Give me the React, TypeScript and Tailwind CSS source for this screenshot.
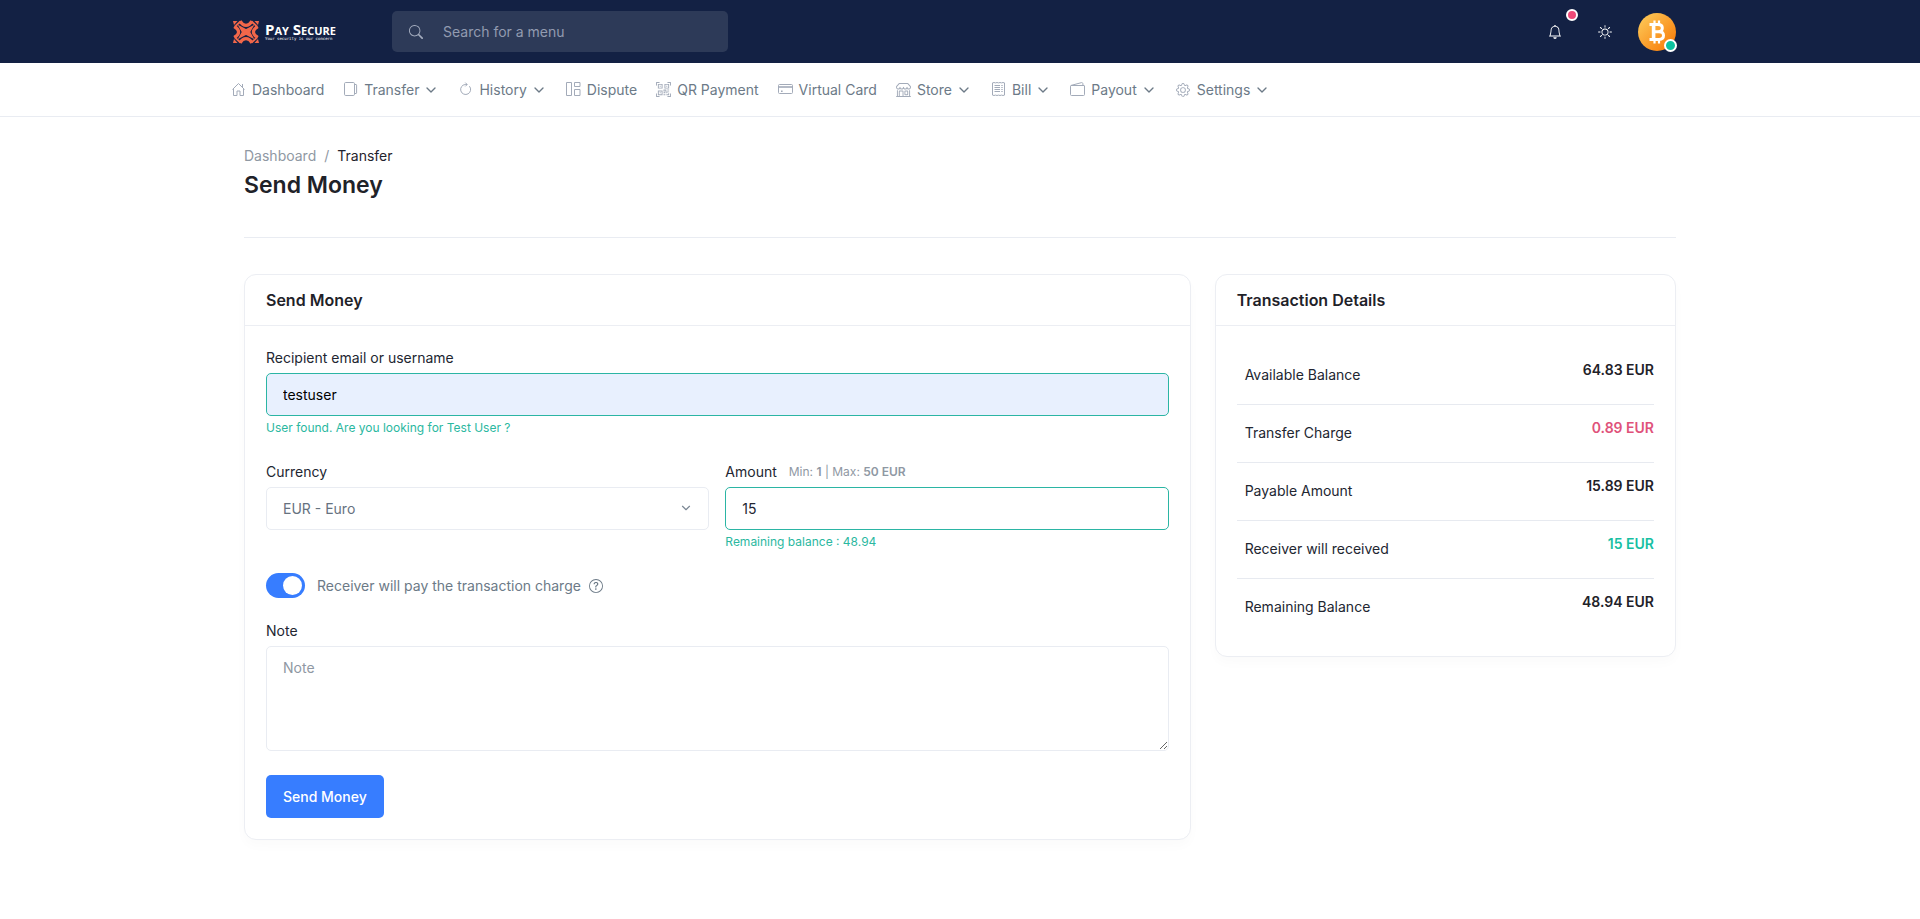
import React from "react";
import { ChevronDown } from "lucide-react";
import { BsBell, BsGear, BsQrCodeScan, BsQuestionCircle, BsSearch, BsShop, BsSun } from "react-icons/bs";

type IconProps = { children: React.ReactNode };

function Outline({ children }: IconProps) {
  return (
    <svg viewBox="0 0 15 15" className="size-[15px]" fill="none" stroke="currentColor" strokeWidth="1" strokeLinejoin="round" aria-hidden="true">
      {children}
    </svg>
  );
}

const HomeIcon = () => (
  <Outline>
    <path d="M1.5 7.500 7.500 1.500l6 6M2.500 7v6.500H6V9h3v4.500h3.500V7M11.500 2v3" />
  </Outline>
);

const TransferIcon = () => (
  <Outline>
    <rect x="1.5" y=".5" width="10" height="13" rx="1.2" />
    <path d="M12 2.5h1a.6.6 0 0 1 .6.6v7.8a.6.6 0 0 1-.6.6h-1" />
  </Outline>
);

const HistoryIcon = () => (
  <Outline>
    <path d="M11.400 4.200A5 5 0 1 1 7.200 2.500H9M7.300.6 9.200 2.500 7.300 4.400" />
  </Outline>
);

const DisputeIcon = () => (
  <Outline>
    <rect x=".5" y=".5" width="5" height="13" />
    <rect x="8.5" y=".5" width="5.500" height="4" />
    <rect x="8.5" y="7.500" width="5.500" height="6" />
  </Outline>
);

const CardIcon = () => (
  <Outline>
    <rect x=".5" y="2.5" width="14" height="9" rx="1" />
    <path d="M.5 5h14" strokeWidth="1.6" />
    <path d="M3 9.2h1.6" strokeWidth="1.6" />
  </Outline>
);

const BillIcon = () => (
  <Outline>
    <path d="M1.5.9 3 .5l1.5.4L6 .5l1.5.4L9 .5l1.5.4L12 .5l1.5.4v12.2l-1.5.4-1.5-.4-1.5.4-1.5-.4-1.5.4-1.5-.4-1.5.4-1.5-.4z" />
    <path d="M3.5 3.5H9M3.5 5.5H9M3.5 7.5H9M3.5 9.5H9M10.3 3.5h1.4M10.3 5.5h1.4M10.3 7.5h1.4M10.3 9.5h1.4" />
  </Outline>
);

const WalletIcon = () => (
  <Outline>
    <path d="M1 3.5h13a.5.5 0 0 1 .5.5v8.500a1 1 0 0 1-1 1h-12a1 1 0 0 1-1-1V4.200c0-.4.2-.7.6-.8L11.600.6c.6-.1 1.100.2 1.200.8l.2 2" />
  </Outline>
);

const navItems = [
  { label: "Dashboard", icon: <HomeIcon />, menu: false },
  { label: "Transfer", icon: <TransferIcon />, menu: true },
  { label: "History", icon: <HistoryIcon />, menu: true },
  { label: "Dispute", icon: <DisputeIcon />, menu: false },
  { label: "QR Payment", icon: <BsQrCodeScan size={15} />, menu: false },
  { label: "Virtual Card", icon: <CardIcon />, menu: false },
  { label: "Store", icon: <BsShop size={15} />, menu: true },
  { label: "Bill", icon: <BillIcon />, menu: true },
  { label: "Payout", icon: <WalletIcon />, menu: true },
  { label: "Settings", icon: <BsGear size={14} />, menu: true },
];

const details = [
  { label: "Available Balance", value: "64.83 EUR", tone: "text-[#1f2229]" },
  { label: "Transfer Charge", value: "0.89 EUR", tone: "text-[#e0527a]" },
  { label: "Payable Amount", value: "15.89 EUR", tone: "text-[#1f2229]" },
  { label: "Receiver will received", value: "15 EUR", tone: "text-[#18bfa3]" },
  { label: "Remaining Balance", value: "48.94 EUR", tone: "text-[#1f2229]" },
];

function LogoMark() {
  return (
    <svg viewBox="0 0 26 24" className="h-6 w-[26px]" fill="none" stroke="#f2674a" aria-hidden="true">
      <path d="M0 1h4.500L1 5zM26 1h-4.500L25 5zM0 23h4.500L1 19zM26 23h-4.500L25 19z" fill="#f2674a" stroke="none" />
      <path d="M6.500 6.500 13 9.800l6.500-3.300L16.500 12l3 5.500L13 14.200l-6.500 3.300 3-5.500z" fill="#f2674a" strokeWidth="1.500" />
      <path d="M7 1.200C9 4.500 11 5.400 13 5.400s4-.9 6-4.200M7 22.800c2-3.300 4-4.200 6-4.200s4 .9 6 4.200" strokeWidth="3.200" />
      <path d="M1.200 6.500C4.800 8.500 5.600 10 5.600 12s-.8 3.500-4.400 5.500M24.800 6.500c-3.600 2-4.400 3.500-4.400 5.500s.8 3.500 4.400 5.500" strokeWidth="3.200" />
      <path d="M2.500 6 7.500 1.500M23.500 6l-5-4.500M2.500 18l5 4.500M23.500 18l-5 4.500" strokeWidth="1.800" />
    </svg>
  );
}

function Avatar() {
  return (
    <svg viewBox="0 0 38 38" className="size-[38px]" aria-hidden="true">
      <defs>
        <linearGradient id="coin" x1="0" y1="0" x2="1" y2="1">
          <stop offset="0.1" stopColor="#fdc655" />
          <stop offset="0.9" stopColor="#f87d0a" />
        </linearGradient>
      </defs>
      <circle cx="19" cy="19" r="19" fill="url(#coin)" />
      <g fill="none" stroke="#fff" strokeWidth="3">
        <path d="M11.500 11.500H20c3 0 4.300 1.500 4.300 3.600s-1.500 3.700-4.300 3.700h-4.500M14.800 18.800h6.200c3 0 4.500 1.600 4.500 3.800s-1.500 3.900-4.500 3.900h-9.500" />
        <path d="M15.600 11.500v15" strokeWidth="3.600" />
        <path d="M16.500 7.500v4M21 7.500v4M16.500 26.500v4M21 26.500v4" strokeWidth="2.200" />
      </g>
    </svg>
  );
}

const fieldClass = "block h-[43px] w-full rounded-[5px] border px-4 text-sm outline-none";
const labelClass = "text-sm leading-5 text-[#222631]";
const cardClass = "rounded-xl border border-[#eceef3] bg-white shadow-[0_6px_12px_rgba(0,0,0,0.02)]";
const cardTitleClass = "border-b border-[#eceef3] px-[21px] py-[13px] text-base leading-6 font-semibold text-[#1f2229]";

export default function App() {
  return (
    <div className="min-h-screen bg-white font-['Inter',sans-serif] text-sm text-[#222631]">
      <header className="bg-[#132144]">
        <div className="mx-auto flex h-[63px] max-w-[1456px] items-center pr-3">
          <a href="#" className="flex w-40 items-center gap-1.5 pl-px">
            <LogoMark />
            <span className="flex flex-col whitespace-nowrap text-white">
              <span className="font-['Open_Sans',sans-serif] text-[15px] leading-[14px] font-bold [font-variant-caps:small-caps]">Pay Secure</span>
              <span className="font-['DejaVu_Sans_Mono',monospace] text-[4px] leading-[6px]">Your security is our concern</span>
            </span>
          </a>
          <label className="flex h-[41px] w-[336px] items-center gap-5 rounded-[5px] bg-[#2d3a58] pl-[17px] text-[#a3abbd]">
            <BsSearch size={14} aria-hidden="true" />
            <input type="search" aria-label="Search for a menu" placeholder="Search for a menu" className="min-w-0 flex-1 bg-transparent text-sm outline-none placeholder:text-[#929bb0]" />
          </label>
          <div className="ml-auto flex items-center text-white">
            <button type="button" aria-label="Notifications" className="relative mr-9 flex size-[14px] items-center justify-center">
              <BsBell size={14} />
              <span className="absolute -top-4 left-[18px] size-3 rounded-full border-2 border-white bg-[#ee4a78]" />
            </button>
            <button type="button" aria-label="Switch theme" className="mr-[26px]">
              <BsSun size={14} />
            </button>
            <button type="button" aria-label="Account" className="relative">
              <Avatar />
              <span className="absolute -right-px -bottom-px size-[13px] rounded-full border-2 border-white bg-[#0cc2a0]" />
            </button>
          </div>
        </div>
      </header>

      <nav className="border-b border-[#e9ecf2]" aria-label="Main">
        <ul className="mx-auto flex h-[53px] max-w-[1458px] items-center gap-[19px]">
          {navItems.map((item) => (
            <li key={item.label}>
              <a href="#" className="flex items-center whitespace-nowrap text-[#6c7a87]">
                <span className="mr-1.5 flex w-[15px] justify-center text-[#a3abb9]">{item.icon}</span>
                {item.label}
                {item.menu && <ChevronDown size={16} strokeWidth={2} className="ml-1" aria-hidden="true" />}
              </a>
            </li>
          ))}
        </ul>
      </nav>

      <main className="mx-auto max-w-[1432px] pb-[79px]">
        <div className="border-b border-[#e9ecf2] pt-[29px] pb-9">
          <nav aria-label="Breadcrumb" className="flex gap-2 leading-5 text-[#8f98a3]">
            <a href="#">Dashboard</a>
            <span>/</span>
            <span className="text-[#1f232d]">Transfer</span>
          </nav>
          <h1 className="mt-[3px] text-[23px] leading-8 font-semibold text-[#1f2229]">Send Money</h1>
        </div>

        <div className="mt-9 grid grid-cols-3 items-start gap-6">
          <section className={`${cardClass} col-span-2`}>
            <h2 className={cardTitleClass}>Send Money</h2>
            <form className="px-[21px] pt-[22px] pb-[21px]">
              <label htmlFor="recipient" className={labelClass}>Recipient email or username</label>
              <input id="recipient" defaultValue="testuser" className={`${fieldClass} mt-[5px] border-[#2bb5a4] bg-[#e8f0fe] text-black`} />
              <p className="mt-1 text-xs leading-4 text-[#2bb89f]">User found. Are you looking for Test User ?</p>

              <div className="mt-[26px] grid grid-cols-2 gap-4">
                <div>
                  <label htmlFor="currency" className={labelClass}>Currency</label>
                  <div className="relative mt-[5px]">
                    <select id="currency" className={`${fieldClass} appearance-none border-[#e9ecf2] bg-white text-[#66727f]`}>
                      <option>EUR - Euro</option>
                    </select>
                    <ChevronDown size={14} className="pointer-events-none absolute top-[14px] right-4 text-[#7b8794]" aria-hidden="true" />
                  </div>
                </div>
                <div>
                  <div className="flex items-center gap-3">
                    <label htmlFor="amount" className={labelClass}>Amount</label>
                    <span className="text-xs text-[#8f98a3]">
                      Min: <b className="font-semibold">1</b> | Max: <b className="font-semibold">50 EUR</b>
                    </span>
                  </div>
                  <input id="amount" defaultValue="15" className={`${fieldClass} mt-[5px] border-[#2bb5a4] bg-white`} />
                  <p className="mt-1 text-xs leading-4 text-[#2bb89f]">Remaining balance : 48.94</p>
                </div>
              </div>

              <div className="mt-[23px] flex items-center">
                <input
                  id="payer"
                  type="checkbox"
                  defaultChecked
                  className="h-[25px] w-[39px] appearance-none rounded-full bg-[#cbd2dc] p-[3px] before:block before:size-[19px] before:rounded-full before:bg-white checked:bg-[#377dff] checked:before:ml-[14px]"
                />
                <label htmlFor="payer" className="ml-3 text-[#6c7a87]">Receiver will pay the transaction charge</label>
                <BsQuestionCircle size={14} className="ml-2 text-[#6c7a87]" aria-hidden="true" />
              </div>

              <label htmlFor="note" className={`${labelClass} mt-[23px] block`}>Note</label>
              <textarea id="note" placeholder="Note" className="mt-[5px] block h-[105px] w-full rounded-[5px] border border-[#e9ecf2] px-4 py-[11px] text-sm outline-none placeholder:text-[#8f98a3]" />

              <button type="submit" className="mt-6 h-[43px] rounded-[5px] bg-[#377dff] px-[17px] text-sm font-medium text-white">Send Money</button>
            </form>
          </section>

          <section className={cardClass}>
            <h2 className={cardTitleClass}>Transaction Details</h2>
            <div className="px-[21px] py-5">
              <table className="w-full">
                <tbody>
                  {details.map((row) => (
                    <tr key={row.label} className="h-[58px] border-b border-[#e7eaf0] last:border-0">
                      <th scope="row" className="pl-2 text-left font-normal">{row.label}</th>
                      <td className={`pb-[10px] text-right font-semibold ${row.tone}`}>{row.value}</td>
                    </tr>
                  ))}
                </tbody>
              </table>
            </div>
          </section>
        </div>
      </main>
    </div>
  );
}
